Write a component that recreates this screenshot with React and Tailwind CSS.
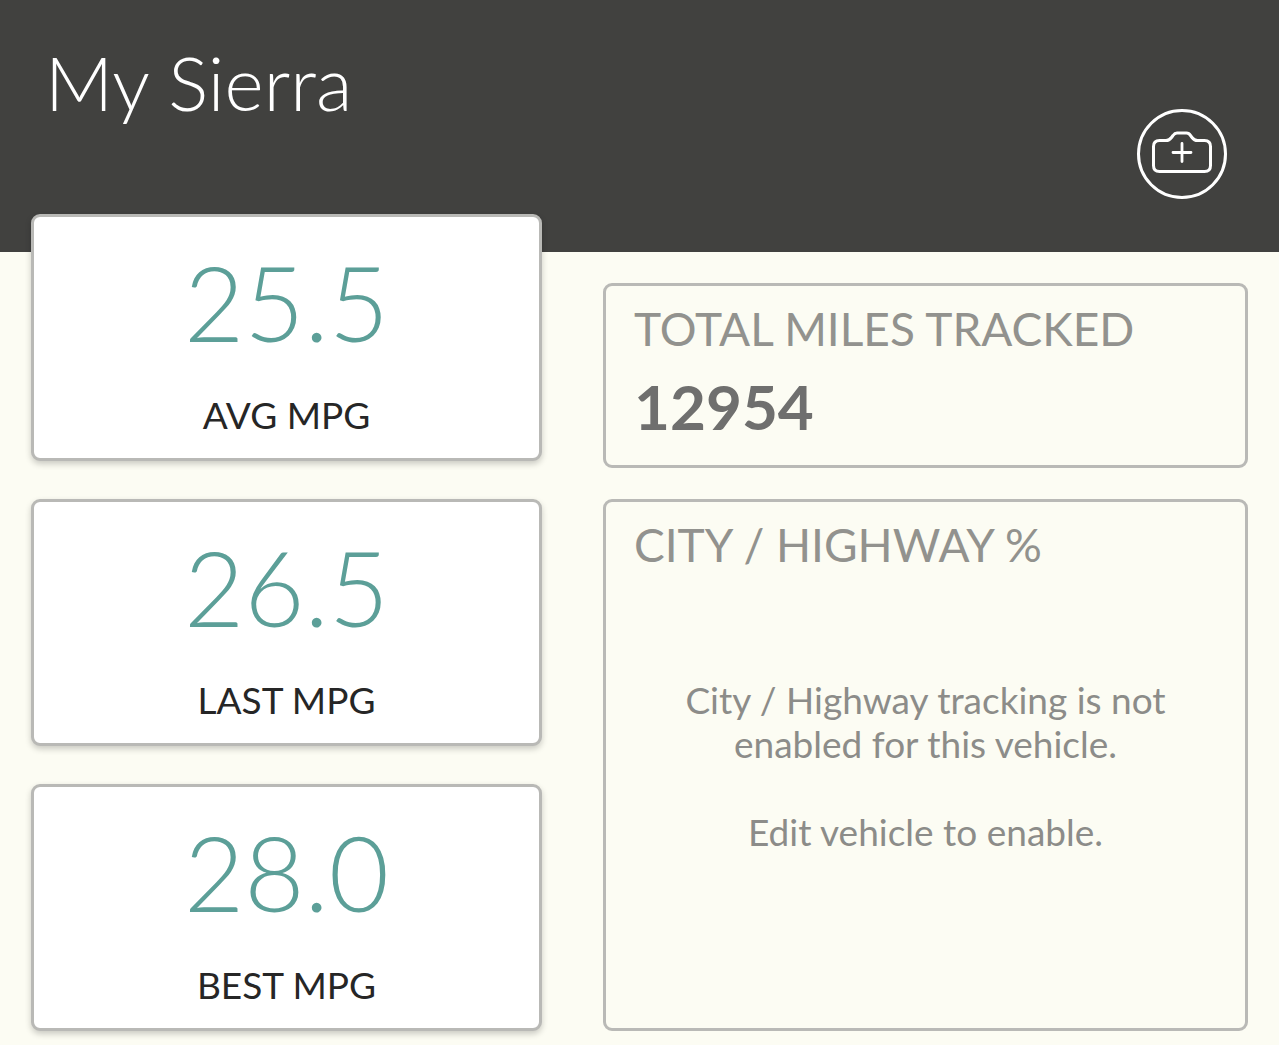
import React from 'react'

const stats = [
  { label: 'AVG MPG', value: '25.5' },
  { label: 'LAST MPG', value: '26.5' },
  { label: 'BEST MPG', value: '28.0' },
]

function CameraIcon() {
  return <svg className="w-[60px] h-[46px]" viewBox="0 0 60 46" fill="none" stroke="currentColor" strokeWidth="3" strokeLinecap="round" strokeLinejoin="round" aria-hidden="true">
    <path d="M7.500 9.500H14C17 9.500 18 8.500 19.500 6.500L21 4.500C22.200 2.800 23 2 25 2H34.500C36.500 2 37.500 2.800 38.500 4.500L40 6.500C41.500 8.500 42.500 9.500 45.500 9.500H52.500Q58.500 9.500 58.500 15.500V34.500Q58.500 40.500 52.500 40.500H7.500Q1.500 40.500 1.500 34.500V15.500Q1.500 9.500 7.500 9.500Z" />
    <path d="M30 12.500V30.500M21 21.500H39" strokeWidth="2.800" />
  </svg>
}

function StatCard({ label, value }) {
  return <div className="flex flex-col items-center gap-[39px] pt-[33px] pb-[21px] bg-white border-3 border-[#b9b9b6] rounded-[9px] shadow-[0_3px_6px_rgba(0,0,0,0.2)]">
    <p className="text-[104px] leading-[104px] font-light text-[#5c9f98]">{value}</p>
    <h2 className="text-[37px] leading-[44px] text-[#262626]">{label}</h2>
  </div>
}

function InfoCard({ title, className, children }) {
  return <section className={`flex flex-col px-[28px] pt-[15px] pb-[23px] border-3 border-[#b9b9b6] rounded-[9px] ${className || ''}`}>
    <h2 className="text-[46px] leading-[56px] text-[#92928e]">{title}</h2>
    {children}
  </section>
}

function App() {
  return <div className="min-h-screen bg-[#fcfcf3] font-['Lato',sans-serif]">
    <header className="flex justify-between h-[252px] pl-[45px] pr-[52px] bg-[#41413f] text-white">
      <h1 className="pt-[38px] text-[75px] leading-[88px] font-light">My Sierra</h1>
      <button aria-label="Add photo" className="flex justify-center items-center mt-[109px] w-[90px] h-[90px] rounded-full border-3 border-white">
        <CameraIcon />
      </button>
    </header>
    <main className="grid grid-cols-[511fr_645fr] gap-x-[61px] px-[31px] pb-[14px]">
      {/* the stat cards overlap the header */}
      <div className="flex flex-col gap-[38px] -mt-[38px]">
        {stats.map(s => <StatCard key={s.label} label={s.label} value={s.value} />)}
      </div>
      <div className="flex flex-col gap-[31px] pt-[31px]">
        <InfoCard title="TOTAL MILES TRACKED">
          <p className="mt-[13px] text-[62px] leading-[72px] font-bold text-[#6f6f6e]">12954</p>
        </InfoCard>
        <InfoCard title="CITY / HIGHWAY %" className="flex-1">
          <div className="flex flex-col gap-[44px] mt-[105px] text-center text-[37px] leading-[44px] text-[#8c8c89]">
            <p>City / Highway tracking is not enabled for this vehicle.</p>
            <p>Edit vehicle to enable.</p>
          </div>
        </InfoCard>
      </div>
    </main>
  </div>
}

export default App
